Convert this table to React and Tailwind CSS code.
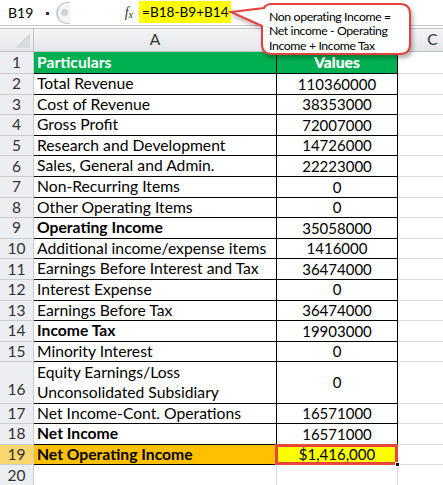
import React from "react";

const rows = [
  { n: 2, a: "Total Revenue", b: "110360000" },
  { n: 3, a: "Cost of Revenue", b: "38353000" },
  { n: 4, a: "Gross Profit", b: "72007000" },
  { n: 5, a: "Research and Development", b: "14726000" },
  { n: 6, a: "Sales, General and Admin.", b: "22223000" },
  { n: 7, a: "Non-Recurring Items", b: "0" },
  { n: 8, a: "Other Operating Items", b: "0" },
  { n: 9, a: "Operating Income", b: "35058000", bold: true },
  { n: 10, a: "Additional income/expense items", b: "1416000" },
  { n: 11, a: "Earnings Before Interest and Tax", b: "36474000" },
  { n: 12, a: "Interest Expense", b: "0" },
  { n: 13, a: "Earnings Before Tax", b: "36474000" },
  { n: 14, a: "Income Tax", b: "19903000", bold: true },
  { n: 15, a: "Minority Interest", b: "0" },
  { n: 16, a: ["Equity Earnings/Loss", "Unconsolidated Subsidiary"], b: "0", tall: true },
  { n: 17, a: "Net Income-Cont. Operations", b: "16571000" },
  { n: 18, a: "Net Income", b: "16571000", bold: true },
];

function RowHead({ n, selected, tall }) {
  return (
    <div
      className={`w-[34px] shrink-0 flex justify-center border-r border-b border-[#c9cdd3] text-[#333] text-[15.5px] ${
        selected ? "bg-[#fad66f]" : "bg-[#eceef1]"
      } ${tall ? "items-end pb-[1px]" : "items-center"}`}
    >
      {n}
    </div>
  );
}

function Spill() {
  return <div className="flex-1 border-b border-[#dadcde]" />;
}

function FormulaBar() {
  return (
    <div className="h-[26px] flex items-stretch border-b border-[#c4c8ce] bg-white">
      <div className="w-[56px] flex items-center pl-[8px] relative text-[14px]">
        B19
        <span className="absolute left-[46px] top-[12px] w-[3px] h-[3px] bg-[#333]" />
      </div>
      <div className="w-[16px] flex items-center">
        <div className="w-[14px] h-[22px] rounded-l-full border-l-2 border-y border-[#c8ccd1] bg-[#f3f4f6] flex items-center justify-center">
          <span className="w-[7px] h-[7px] rounded-full bg-[#cfd3d8]" />
        </div>
      </div>
      <div className="w-[67px] flex items-center justify-end pr-[6px]">
        <span className="italic text-[14px] text-[#333]" style={{ fontFamily: "'Liberation Serif', serif" }}>
          f<span className="text-[10px] align-[-1px]">x</span>
        </span>
      </div>
      <div className="flex items-start pt-[1px]">
        <div className="bg-[#ffff00] h-[22px] w-[92px] flex items-center pl-[3px] text-[13.6px] whitespace-nowrap">
          =B18-B9+B14
        </div>
      </div>
    </div>
  );
}

function Callout() {
  return (
    <div className="absolute left-[228px] top-[1px] w-[190px] h-[60px]">
      <svg width="190" height="60" className="absolute inset-0">
        <defs>
          <filter id="sh" x="-10%" y="-10%" width="130%" height="140%">
            <feDropShadow dx="2" dy="3" stdDeviation="2" floodColor="#000" floodOpacity="0.3" />
          </filter>
        </defs>
        <path
          d="M44 3 H172 Q182 3 182 13 V43 Q182 53 172 53 H44 Q34 53 34 43 V25 L3 11 L36 7 Q38 3 44 3 Z"
          fill="#fff"
          stroke="#e2433b"
          strokeWidth="2"
          filter="url(#sh)"
        />
      </svg>
      <div className="absolute left-[41px] top-[9px] text-[12.3px] leading-[14.3px] tracking-[-0.4px] text-black whitespace-nowrap">
        <div>Non operating Income =</div>
        <div>Net income - Operating</div>
        <div>Income + Income Tax</div>
      </div>
    </div>
  );
}

export default function App() {
  return (
    <div
      className="relative w-[443px] h-[485px] overflow-hidden bg-white text-[15px] text-black"
      style={{ fontFamily: "Lato, 'Noto Sans', sans-serif" }}
    >
      <FormulaBar />
      <div className="h-[3px] bg-white border-b border-[#c4c8ce]" />

      {/* column headers */}
      <div className="h-[23px] flex bg-gradient-to-b from-[#f4f5f7] to-[#e3e6ea] text-[#333] text-[15.5px]">
        <div className="w-[34px] shrink-0 border-r border-b border-[#c0c4ca] relative">
          <span className="absolute right-[3px] bottom-[3px] w-0 h-0 border-l-[15px] border-l-transparent border-b-[15px] border-b-[#d7dade]" />
        </div>
        <div className="w-[243px] shrink-0 flex items-center justify-center border-r border-b border-[#c0c4ca]">A</div>
        <div className="w-[121px] shrink-0 border-r border-b border-[#c0c4ca]" />
        <div className="w-[70px] shrink-0 flex items-center justify-center border-r border-b border-[#c0c4ca]">C</div>
      </div>

      {/* row 1 */}
      <div className="h-[22px] flex text-[15.7px]">
        <RowHead n={1} />
        <div className="w-[243px] shrink-0 bg-[#00b050] text-white font-bold pl-[3px] flex items-center border-r border-b border-black">
          Particulars
        </div>
        <div className="w-[121px] shrink-0 bg-[#00b050] text-white font-bold flex items-center justify-center border-r border-b border-black [text-shadow:0_0_1px_#9bd4b0]">
          Values
        </div>
        <Spill />
      </div>

      {rows.map((r) => (
        <div key={r.n} className={`flex ${r.tall ? "h-[41.4px]" : "h-[20.6px]"}`}>
          <RowHead n={r.n} tall={r.tall} />
          <div
            className={`w-[243px] shrink-0 pl-[3px] border-r border-b border-black whitespace-nowrap overflow-hidden flex text-[15.7px] ${
              r.tall ? "flex-col justify-end leading-[20.5px]" : "items-center"
            } ${r.bold ? "font-bold" : ""}`}
          >
            {r.tall ? r.a.map((t) => <div key={t}>{t}</div>) : r.a}
          </div>
          <div className="w-[121px] shrink-0 flex items-center justify-center border-r border-b border-black">
            {r.b}
          </div>
          <Spill />
        </div>
      ))}

      {/* row 19 */}
      <div className="h-[20.6px] flex">
        <RowHead n={19} selected />
        <div className="w-[243px] shrink-0 bg-[#ffc000] font-bold pl-[3px] flex items-center border-r border-b border-black text-[15.7px]">
          Net Operating Income
        </div>
        <div className="w-[121px] shrink-0 bg-[#ffff00] flex items-center justify-center border-r border-b border-black relative">
          $1,416,000
          <span className="absolute -left-[2px] -top-[1px] -right-[1px] -bottom-[1px] border-[3px] border-[#e8463a]" />
          <span className="absolute -right-[3px] -bottom-[3px] w-[5px] h-[5px] bg-black border border-white" />
        </div>
        <Spill />
      </div>

      {/* row 20 */}
      <div className="h-[20.6px] flex">
        <RowHead n={20} />
        <div className="w-[243px] shrink-0 border-r border-b border-[#dadcde]" />
        <div className="w-[121px] shrink-0 border-r border-b border-[#dadcde]" />
        <Spill />
      </div>

      <Callout />
    </div>
  );
}
